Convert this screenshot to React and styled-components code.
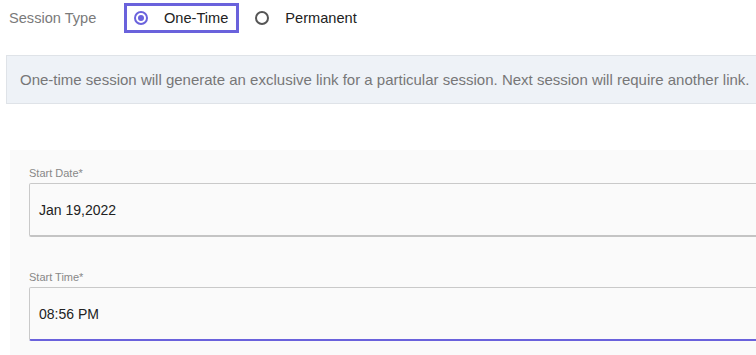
import styled, { createGlobalStyle } from "styled-components";

const GlobalStyle = createGlobalStyle`
  html, body {
    margin: 0;
    padding: 0;
    background: #fff;
    overflow: hidden;
    font-family: "Liberation Sans", Arial, sans-serif;
  }
`;

export default function App() {
  return (
    <Page>
      <GlobalStyle />
      <TypeRow>
        <RowLabel>Session Type</RowLabel>
        <RadioOption $focused>
          <RadioDot $checked />
          <OptionText>One-Time</OptionText>
        </RadioOption>
        <RadioOption>
          <RadioDot />
          <OptionText>Permanent</OptionText>
        </RadioOption>
      </TypeRow>
      <InfoBox>
        One-time session will generate an exclusive link for a particular session. Next session will require another link.
      </InfoBox>
      <FormPanel>
        <Field label="Start Date*" value="Jan 19,2022" />
        <Field label="Start Time*" value="08:56 PM" active />
      </FormPanel>
    </Page>
  );
}

function Field({ label, value, active }) {
  return (
    <FieldWrap>
      <FieldLabel>{label}</FieldLabel>
      <InputBox $active={active}>{value}</InputBox>
    </FieldWrap>
  );
}

const Page = styled.div`
  width: 800px;
`;

const TypeRow = styled.div`
  display: flex;
  align-items: center;
  height: 36px;
  padding-left: 9px;
`;

const RowLabel = styled.div`
  width: 115px;
  font-size: 14.6px;
  color: #7a7a7a;
`;

const RadioOption = styled.label`
  display: flex;
  align-items: center;
  box-sizing: border-box;
  height: 30px;
  margin-right: 6px;
  padding: 0 8px 0 7px;
  border: 3px solid ${(p) => (p.$focused ? "#6a62dc" : "transparent")};
  font-size: 14.6px;
  color: #222;
`;

const OptionText = styled.span`
  margin-left: 16px;
`;

const RadioDot = styled.span`
  position: relative;
  flex: 0 0 14px;
  box-sizing: border-box;
  width: 14px;
  height: 14px;
  border-radius: 50%;
  border: 2px solid ${(p) => (p.$checked ? "#6a62dc" : "#555")};
  &::after {
    content: "";
    display: ${(p) => (p.$checked ? "block" : "none")};
    position: absolute;
    left: 2px;
    top: 2px;
    width: 6px;
    height: 6px;
    border-radius: 50%;
    background: #6a62dc;
  }
`;

const InfoBox = styled.div`
  margin: 19px 0 0 6px;
  padding: 15px 13px 15px;
  border: 1px solid #dfe3e8;
  background: #eef2f7;
  font-size: 15px;
  line-height: 17px;
  color: #777;
`;

const FormPanel = styled.div`
  margin: 46px 0 0 10px;
  padding: 17px 0 20px 19px;
  background: #fafafa;
  display: flex;
  flex-direction: column;
  gap: 34px;
`;

const FieldWrap = styled.div`
  display: flex;
  flex-direction: column;
`;

const FieldLabel = styled.div`
  font-size: 11px;
  line-height: 13px;
  color: #888;
  margin-bottom: 3px;
`;

const InputBox = styled.div`
  box-sizing: border-box;
  height: 54px;
  display: flex;
  align-items: center;
  padding: 0 9px;
  border: 1px solid #c9c9c9;
  border-bottom: 2px solid ${(p) => (p.$active ? "#6a62dc" : "#c4c4c4")};
  border-radius: 2px 0 0 2px;
  background: #fafafa;
  font-size: 14px;
  color: #222;
`;
